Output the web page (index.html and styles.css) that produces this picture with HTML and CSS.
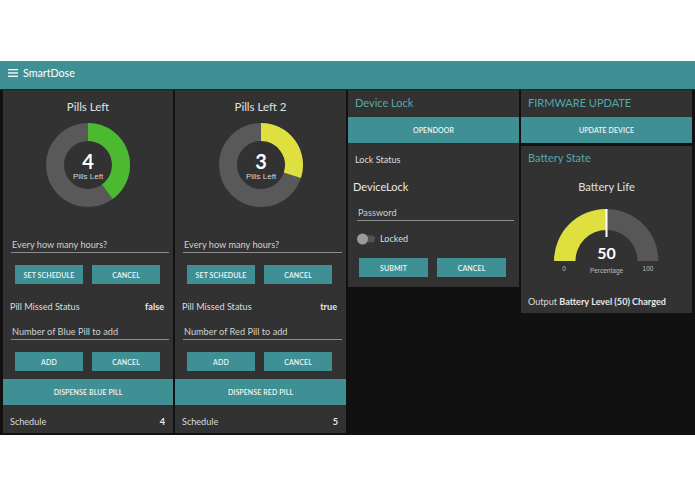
FILE: index.html
```html
<!DOCTYPE html>
<html lang="en">
<head>
<meta charset="utf-8">
<title>SmartDose</title>
<link rel="stylesheet" href="styles.css">
</head>
<body>
<div class="top-space"></div>
<header class="toolbar">
  <svg class="menu-icon" width="10" height="8" viewBox="0 0 10 8"><rect x="0" y="0" width="10" height="1.3" fill="#fff"/><rect x="0" y="3.3" width="10" height="1.3" fill="#fff"/><rect x="0" y="6.6" width="10" height="1.3" fill="#fff"/></svg>
  <span class="app-title">SmartDose</span>
</header>
<main class="dash">
  <section class="panel pills">
    <div class="gauge-title">Pills Left</div>
    <div class="donut">
      <svg width="84" height="84" viewBox="0 0 84 84">
        <circle cx="42" cy="42" r="33" fill="none" stroke="#595959" stroke-width="18"/>
        <path d="M42 9 A33 33 0 0 1 61.4 68.7" fill="none" stroke="#4cba31" stroke-width="18"/>
        <text x="42" y="46" text-anchor="middle" class="donut-val">4</text>
        <text x="42" y="56" text-anchor="middle" class="donut-lbl">Pills Left</text>
      </svg>
    </div>
    <div class="field">Every how many hours?</div>
    <div class="btn-row"><button class="btn">SET SCHEDULE</button><button class="btn">CANCEL</button></div>
    <div class="text-row status-row"><span>Pill Missed Status</span><b>false</b></div>
    <div class="field field-2">Number of Blue Pill to add</div>
    <div class="btn-row"><button class="btn">ADD</button><button class="btn">CANCEL</button></div>
    <button class="btn btn-wide dispense">DISPENSE BLUE PILL</button>
    <div class="text-row last-row"><span>Schedule</span><b>4</b></div>
  </section>

  <section class="panel pills">
    <div class="gauge-title">Pills Left 2</div>
    <div class="donut">
      <svg width="84" height="84" viewBox="0 0 84 84">
        <circle cx="42" cy="42" r="33" fill="none" stroke="#595959" stroke-width="18"/>
        <path d="M42 9 A33 33 0 0 1 73.38 52.2" fill="none" stroke="#dfe03f" stroke-width="18"/>
        <text x="42" y="46" text-anchor="middle" class="donut-val">3</text>
        <text x="42" y="56" text-anchor="middle" class="donut-lbl">Pills Left</text>
      </svg>
    </div>
    <div class="field">Every how many hours?</div>
    <div class="btn-row"><button class="btn">SET SCHEDULE</button><button class="btn">CANCEL</button></div>
    <div class="text-row status-row"><span>Pill Missed Status</span><b>true</b></div>
    <div class="field field-2">Number of Red Pill to add</div>
    <div class="btn-row"><button class="btn">ADD</button><button class="btn">CANCEL</button></div>
    <button class="btn btn-wide dispense">DISPENSE RED PILL</button>
    <div class="text-row last-row"><span>Schedule</span><b>5</b></div>
  </section>

  <section class="panel lock">
    <div class="group-title">Device Lock</div>
    <button class="btn btn-wide">OPENDOOR</button>
    <div class="text-row lock-status"><span>Lock Status</span></div>
    <div class="text-row device-name"><span>DeviceLock</span></div>
    <div class="field pw-field">Password</div>
    <div class="toggle-row">
      <svg width="19" height="12" viewBox="0 0 19 12"><rect x="2" y="2.5" width="16" height="7" rx="3.5" fill="#525252"/><circle cx="5.5" cy="6" r="5.5" fill="#9a9a9a"/></svg>
      <span>Locked</span>
    </div>
    <div class="btn-row lock-btns"><button class="btn">SUBMIT</button><button class="btn">CANCEL</button></div>
  </section>

  <div class="stack">
    <section class="panel firmware">
      <div class="group-title">FIRMWARE UPDATE</div>
      <button class="btn btn-wide">UPDATE DEVICE</button>
    </section>
    <section class="panel battery">
      <div class="group-title battery-title">Battery State</div>
      <div class="gauge-caption">Battery Life</div>
      <svg class="gauge" width="171" height="80" viewBox="0 0 171 80">
        <path d="M33 61 A52 52 0 0 1 85.5 9 L85.5 30 A31 31 0 0 0 54.5 61 Z" fill="#dfe03f"/>
        <path d="M85.5 9 A52 52 0 0 1 137.5 61 L116.5 61 A31 31 0 0 0 85.5 30 Z" fill="#575757"/>
        <line x1="85.5" y1="9" x2="85.5" y2="37" stroke="#ffffff" stroke-width="2"/>
        <text x="85.5" y="59" text-anchor="middle" class="gauge-val">50</text>
        <text x="85.5" y="72.5" text-anchor="middle" class="gauge-small">Percentage</text>
        <text x="43" y="71" text-anchor="middle" class="gauge-small">0</text>
        <text x="127" y="71" text-anchor="middle" class="gauge-small">100</text>
      </svg>
      <div class="text-row output-row"><span>Output <b>Battery Level (50) Charged</b></span></div>
    </section>
  </div>
</main>
</body>
</html>
```
FILE: styles.css
```css
* {
  box-sizing: border-box;
  margin: 0;
  padding: 0;
}

body {
  width: 695px;
  height: 494px;
  background: #ffffff;
  font-family: Lato, "Open Sans", sans-serif;
  color: #dddddd;
  overflow: hidden;
}

.top-space {
  height: 61px;
}

.toolbar {
  height: 29px;
  background: #3f9095;
  border-bottom: 1px solid #17292b;
  display: flex;
  align-items: center;
  padding: 0 0 5px 8px;
  color: #ffffff;
}

.menu-icon {
  display: block;
  margin-right: 5px;
}

.app-title {
  font-size: 10.7px;
}

.dash {
  height: 345px;
  background: #111111;
  display: grid;
  grid-template-columns: 170px 171px 171px 171px;
  column-gap: 2px;
  padding: 0 3px;
  align-items: start;
}

.panel {
  background: #323232;
}

.pills {
  height: 343px;
}

.gauge-title {
  height: 33px;
  display: flex;
  align-items: center;
  justify-content: center;
  font-size: 11.5px;
  color: #e0e0e0;
}

.donut {
  height: 84px;
  display: flex;
  justify-content: center;
}

.donut svg {
  display: block;
}

.donut-val {
  font-family: Lato, sans-serif;
  font-weight: 700;
  font-size: 20px;
  fill: #ffffff;
}

.donut-lbl {
  font-family: "Liberation Sans", Arial, sans-serif;
  font-size: 8px;
  fill: #d6d6d6;
}

.field {
  margin: 30px 4px 0 8px;
  height: 16px;
  border-bottom: 1px solid #8c8c8c;
  font-size: 9.2px;
  line-height: 15px;
  padding-left: 1px;
  color: #d0d0d0;
}

.field-2 {
  margin-top: 9px;
}

.btn-row {
  display: flex;
  gap: 9px;
  padding-left: 12px;
  margin-top: 12px;
}

.btn {
  width: 68px;
  height: 19px;
  background: #3f9095;
  color: #eef6f6;
  border: 0;
  font-family: Lato, sans-serif;
  font-weight: 600;
  font-size: 7px;
  letter-spacing: 0.1px;
  display: block;
}

.btn-wide {
  width: 100%;
  height: 26px;
}

.dispense {
  margin-top: 8px;
}

.text-row {
  display: flex;
  justify-content: space-between;
  align-items: center;
  height: 18px;
  padding: 0 9px 0 7px;
  font-size: 9.1px;
  color: #dcdcdc;
}

.text-row b {
  font-weight: 700;
  color: #e8e8e8;
}

.status-row {
  margin-top: 13px;
}

.last-row {
  margin-top: 7px;
  padding-right: 8px;
}

.group-title {
  height: 27px;
  display: flex;
  align-items: center;
  padding: 0 0 2px 7px;
  color: #55a8ab;
  font-size: 11px;
}

.lock {
  padding-bottom: 10px;
}

.lock-status {
  margin-top: 7px;
}

.device-name {
  margin-top: 9px;
  padding-left: 5px;
  font-size: 11px;
  color: #e6e6e6;
}

.pw-field {
  margin: 10px 5px 0 9px;
}

.toggle-row {
  margin-top: 9px;
  height: 17px;
  display: flex;
  align-items: center;
  gap: 4px;
  padding-left: 9px;
  font-size: 9.1px;
  color: #dcdcdc;
}

.toggle-row svg {
  display: block;
}

.lock-btns {
  margin-top: 11px;
  padding-left: 11px;
}

.lock-btns .btn {
  width: 69px;
}

.stack {
  display: flex;
  flex-direction: column;
  gap: 3px;
}

.battery {
  padding-bottom: 3px;
}

.battery-title {
  height: 24px;
}

.gauge-caption {
  margin-top: 7px;
  height: 18px;
  display: flex;
  align-items: center;
  justify-content: center;
  font-size: 11.2px;
  color: #e0e0e0;
}

.gauge {
  display: block;
  margin-top: 5px;
}

.gauge-val {
  font-family: Lato, sans-serif;
  font-weight: 700;
  font-size: 16px;
  fill: #ffffff;
}

.gauge-small {
  font-family: "Liberation Sans", Arial, sans-serif;
  font-size: 6.5px;
  fill: #bdbdbd;
}

.output-row {
  margin-top: 12px;
}
```
